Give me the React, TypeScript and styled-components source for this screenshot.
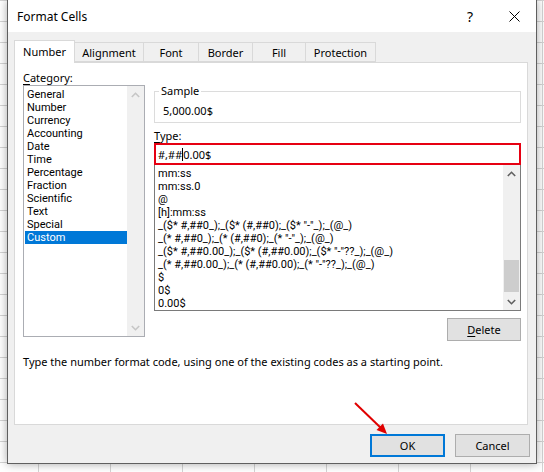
import React from "react";
import styled, { createGlobalStyle } from "styled-components";

const GlobalStyle = createGlobalStyle`
  html, body {
    margin: 0;
    padding: 0;
  }
  body {
    font-family: "Noto Sans", "Liberation Sans", sans-serif;
    font-size: 11px;
    color: #000;
  }
  * {
    box-sizing: border-box;
  }
`;

const Desktop = styled.div`
  position: relative;
  width: 544px;
  height: 472px;
  overflow: hidden;
  padding-left: 7px;
  background-color: #fff;
  background-image: linear-gradient(to right, #d4d4d4 1px, transparent 1px),
    linear-gradient(to bottom, #d4d4d4 1px, transparent 1px);
  background-size: 72px 21px;
  background-position: 38px 0;
`;

const Dialog = styled.div`
  width: 530px;
  height: 464px;
  border: 1px solid #5f5f5f;
  border-top: none;
  background: #f0f0f0;
  box-shadow: 0 0 9px rgba(0, 0, 0, 0.35);
  display: flex;
  flex-direction: column;
`;

const TitleBar = styled.div`
  height: 32px;
  flex-shrink: 0;
  background: #fff;
  display: flex;
  align-items: center;
  padding-left: 9px;
`;

const Title = styled.div`
  flex: 1;
  font-size: 12px;
`;

const TitleButton = styled.div`
  width: 44px;
  height: 32px;
  display: flex;
  align-items: center;
  justify-content: center;
  font-size: 14px;
`;

const Content = styled.div`
  padding: 8px 8px 0 6px;
`;

const TabRow = styled.div`
  display: flex;
  align-items: flex-end;
  height: 22px;
`;

const Tab = styled.div<{ $active?: boolean; $w: number }>`
  position: relative;
  width: ${(p) => p.$w}px;
  height: ${(p) => (p.$active ? 23 : 20)}px;
  margin-right: -1px;
  margin-bottom: ${(p) => (p.$active ? -1 : 0)}px;
  z-index: ${(p) => (p.$active ? 1 : 0)};
  border: 1px solid #d9d9d9;
  border-bottom: ${(p) => (p.$active ? "none" : "1px solid #d9d9d9")};
  background: ${(p) => (p.$active ? "#fff" : "#f0f0f0")};
  display: flex;
  justify-content: center;
  padding-top: ${(p) => (p.$active ? 3 : 2)}px;
  line-height: 15px;
`;

const Panel = styled.div`
  width: 514px;
  height: 363px;
  border: 1px solid #d9d9d9;
  background: #fff;
  padding: 7px 6px 0 8px;
  display: grid;
  grid-template-columns: 122px 367px;
  column-gap: 9px;
  align-content: start;
`;

const Column = styled.div`
  display: flex;
  flex-direction: column;
`;

const Label = styled.div<{ $mt?: number }>`
  line-height: 15px;
  height: 15px;
  margin-top: ${(p) => p.$mt ?? 0}px;
`;

const Key = styled.span`
  text-decoration: underline;
  text-underline-offset: 2px;
`;

const ListBox = styled.div<{ $h: number; $border: string; $noTop?: boolean }>`
  height: ${(p) => p.$h}px;
  border: 1px solid ${(p) => p.$border};
  ${(p) => (p.$noTop ? "border-top: none;" : "")}
  display: flex;
`;

const Items = styled.div<{ $pt: number }>`
  flex: 1;
  padding: ${(p) => p.$pt}px 0 0 1px;
  overflow: hidden;
`;

const Item = styled.div<{ $selected?: boolean }>`
  height: 13px;
  line-height: 13px;
  padding-left: 2px;
  font-family: Roboto, "Noto Sans", sans-serif;
  font-size: 11px;
  white-space: nowrap;
  background: ${(p) => (p.$selected ? "#0078d7" : "transparent")};
  color: ${(p) => (p.$selected ? "#fff" : "#000")};
`;

const ScrollBar = styled.div`
  width: 17px;
  background: #f0f0f0;
  display: flex;
  flex-direction: column;
`;

const ArrowBox = styled.div`
  height: 17px;
  display: flex;
  align-items: center;
  justify-content: center;
`;

const Track = styled.div`
  flex: 1;
  padding: 0 1px;
`;

const Thumb = styled.div<{ $top: number; $h: number }>`
  margin-top: ${(p) => p.$top}px;
  height: ${(p) => p.$h}px;
  background: #cdcdcd;
`;

const GroupBox = styled.div`
  position: relative;
  margin-top: 21px;
  height: 32px;
  border: 1px solid #dcdcdc;
  padding: 12px 0 0 8px;
  line-height: 14px;
`;

const Legend = styled.span`
  position: absolute;
  top: -8px;
  left: 4px;
  padding: 0 2px;
  background: #fff;
  line-height: 14px;
`;

const TypeInput = styled.div`
  height: 22px;
  border: 2px solid #e60012;
  padding-left: 2px;
  display: flex;
  align-items: center;
`;

const Caret = styled.span`
  display: inline-block;
  width: 1px;
  height: 13px;
  background: #000;
`;

const Button = styled.div<{ $default?: boolean; $w: number }>`
  width: ${(p) => p.$w}px;
  height: 23px;
  background: #e1e1e1;
  border: ${(p) => (p.$default ? "2px solid #0078d7" : "1px solid #adadad")};
  display: flex;
  align-items: center;
  justify-content: center;
`;

const RightAligned = styled.div`
  display: flex;
  justify-content: flex-end;
  margin-top: 7px;
`;

const Description = styled.div`
  grid-column: 1 / -1;
  margin-top: 13px;
  line-height: 15px;
`;

const Footer = styled.div`
  display: flex;
  justify-content: flex-end;
  gap: 10px;
  margin-top: 9px;
  margin-right: -2px;
`;

const Overlay = styled.svg`
  position: absolute;
  left: 0;
  top: 0;
  pointer-events: none;
`;

const Chevron = ({ up, color }: { up?: boolean; color: string }) => (
  <svg width="9" height="6" viewBox="0 0 9 6">
    <polyline
      points={up ? "0.8,5 4.5,1.3 8.2,5" : "0.8,1 4.5,4.7 8.2,1"}
      fill="none"
      stroke={color}
      strokeWidth="1.6"
    />
  </svg>
);

const categories = [
  "General",
  "Number",
  "Currency",
  "Accounting",
  "Date",
  "Time",
  "Percentage",
  "Fraction",
  "Scientific",
  "Text",
  "Special",
  "Custom",
];

const formats = [
  "mm:ss",
  "mm:ss.0",
  "@",
  "[h]:mm:ss",
  '_($* #,##0_);_($* (#,##0);_($* "-"_);_(@_)',
  '_(* #,##0_);_(* (#,##0);_(* "-"_);_(@_)',
  '_($* #,##0.00_);_($* (#,##0.00);_($* "-"??_);_(@_)',
  '_(* #,##0.00_);_(* (#,##0.00);_(* "-"??_);_(@_)',
  "$",
  "0$",
  "0.00$",
];

const tabs = [
  { name: "Number", w: 61 },
  { name: "Alignment", w: 70 },
  { name: "Font", w: 56 },
  { name: "Border", w: 55 },
  { name: "Fill", w: 54 },
  { name: "Protection", w: 71 },
];

export default function App() {
  return (
    <>
      <GlobalStyle />
      <Desktop>
        <Dialog>
          <TitleBar>
            <Title>Format Cells</Title>
            <TitleButton>?</TitleButton>
            <TitleButton>
              <svg width="11" height="11" viewBox="0 0 11 11">
                <path d="M0.5 0.5 L10.5 10.5 M10.5 0.5 L0.5 10.5" stroke="#000" strokeWidth="1" />
              </svg>
            </TitleButton>
          </TitleBar>
          <Content>
            <TabRow>
              {tabs.map((t, i) => (
                <Tab key={t.name} $w={t.w} $active={i === 0}>
                  {t.name}
                </Tab>
              ))}
            </TabRow>
            <Panel>
              <Column>
                <Label>
                  <Key>C</Key>ategory:
                </Label>
                <ListBox $h={252} $border="#abadb3">
                  <Items $pt={2}>
                    {categories.map((c) => (
                      <Item key={c} $selected={c === "Custom"}>
                        {c}
                      </Item>
                    ))}
                  </Items>
                  <ScrollBar>
                    <ArrowBox>
                      <Chevron up color="#c6c6c6" />
                    </ArrowBox>
                    <Track />
                    <ArrowBox>
                      <Chevron color="#c6c6c6" />
                    </ArrowBox>
                  </ScrollBar>
                </ListBox>
              </Column>
              <Column>
                <GroupBox>
                  <Legend>Sample</Legend>
                  5,000.00$
                </GroupBox>
                <Label $mt={5}>
                  <Key>T</Key>ype:
                </Label>
                <TypeInput>
                  #,##
                  <Caret />
                  0.00$
                </TypeInput>
                <ListBox $h={146} $border="#7a7a7a" $noTop>
                  <Items $pt={2}>
                    {formats.map((f) => (
                      <Item key={f}>{f}</Item>
                    ))}
                  </Items>
                  <ScrollBar>
                    <ArrowBox>
                      <Chevron up color="#606060" />
                    </ArrowBox>
                    <Track>
                      <Thumb $top={78} $h={32} />
                    </Track>
                    <ArrowBox>
                      <Chevron color="#606060" />
                    </ArrowBox>
                  </ScrollBar>
                </ListBox>
                <RightAligned>
                  <Button $w={74}>
                    <span>
                      <Key>D</Key>elete
                    </span>
                  </Button>
                </RightAligned>
              </Column>
              <Description>
                Type the number format code, using one of the existing codes as a starting point.
              </Description>
            </Panel>
            <Footer>
              <Button $default $w={75}>
                OK
              </Button>
              <Button $w={75}>Cancel</Button>
            </Footer>
          </Content>
        </Dialog>
        <Overlay width="544" height="472" viewBox="0 0 544 472">
          <line x1="355" y1="403" x2="382" y2="429" stroke="#e00000" strokeWidth="2" />
          <polygon points="387,434 376.5,430 383,423.5" fill="#e00000" />
        </Overlay>
      </Desktop>
    </>
  );
}
